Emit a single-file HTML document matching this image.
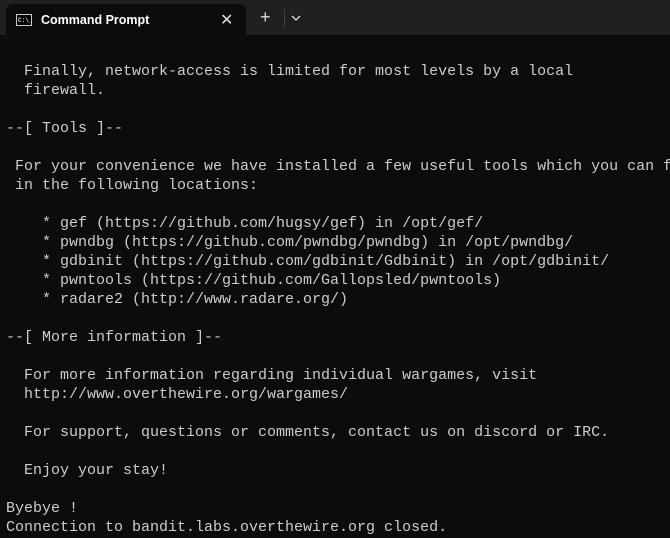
<!DOCTYPE html>
<html><head><meta charset="utf-8"><style>
*{margin:0;padding:0;box-sizing:border-box}
body{width:670px;height:538px;background:#0c0c0c;overflow:hidden;position:relative;font-family:"Liberation Sans",sans-serif}
#bar{position:absolute;left:0;top:0;width:670px;height:35px;background:#202020}
#tab{position:absolute;left:6px;top:4px;width:240px;height:31px;background:#0c0c0c;border-radius:7px 7px 0 0}
#icon{position:absolute;left:10px;top:10px;width:16px;height:12px;border:1px solid #ccc;background:#000}
#icon span{position:absolute;left:1px;top:2px;font:bold 6px "Liberation Mono",monospace;color:#ddd}
#title{position:absolute;left:35px;top:9px;font-size:12.5px;font-weight:bold;color:#fff}
#x{position:absolute;left:214px;top:6px;color:#ddd;font-size:16px}
#plus{position:absolute;left:260px;top:8px;color:#ddd;font-size:18px;line-height:18px}
#sep{position:absolute;left:284px;top:9px;width:1px;height:18px;background:#444}
#chev{position:absolute;left:291px;top:14px}
pre{position:absolute;left:6px;top:62px;font:15px/19px "Liberation Mono",monospace;color:#cccccc}
</style></head><body>
<div id="bar"><div id="tab"><div id="icon"><span>C:\_</span></div><div id="title">Command Prompt</div><div id="x">✕</div></div>
<div id="plus">+</div><div id="sep"></div>
<svg id="chev" width="10" height="8" viewBox="0 0 10 8"><path d="M1 2 L5 6 L9 2" stroke="#ddd" stroke-width="1.3" fill="none"/></svg></div>
<pre>  Finally, network-access is limited for most levels by a local
  firewall.

--[ Tools ]--

 For your convenience we have installed a few useful tools which you can f
 in the following locations:

    * gef (https://github.com/hugsy/gef) in /opt/gef/
    * pwndbg (https://github.com/pwndbg/pwndbg) in /opt/pwndbg/
    * gdbinit (https://github.com/gdbinit/Gdbinit) in /opt/gdbinit/
    * pwntools (https://github.com/Gallopsled/pwntools)
    * radare2 (http://www.radare.org/)

--[ More information ]--

  For more information regarding individual wargames, visit
  http://www.overthewire.org/wargames/

  For support, questions or comments, contact us on discord or IRC.

  Enjoy your stay!

Byebye !
Connection to bandit.labs.overthewire.org closed.</pre>
</body></html>
